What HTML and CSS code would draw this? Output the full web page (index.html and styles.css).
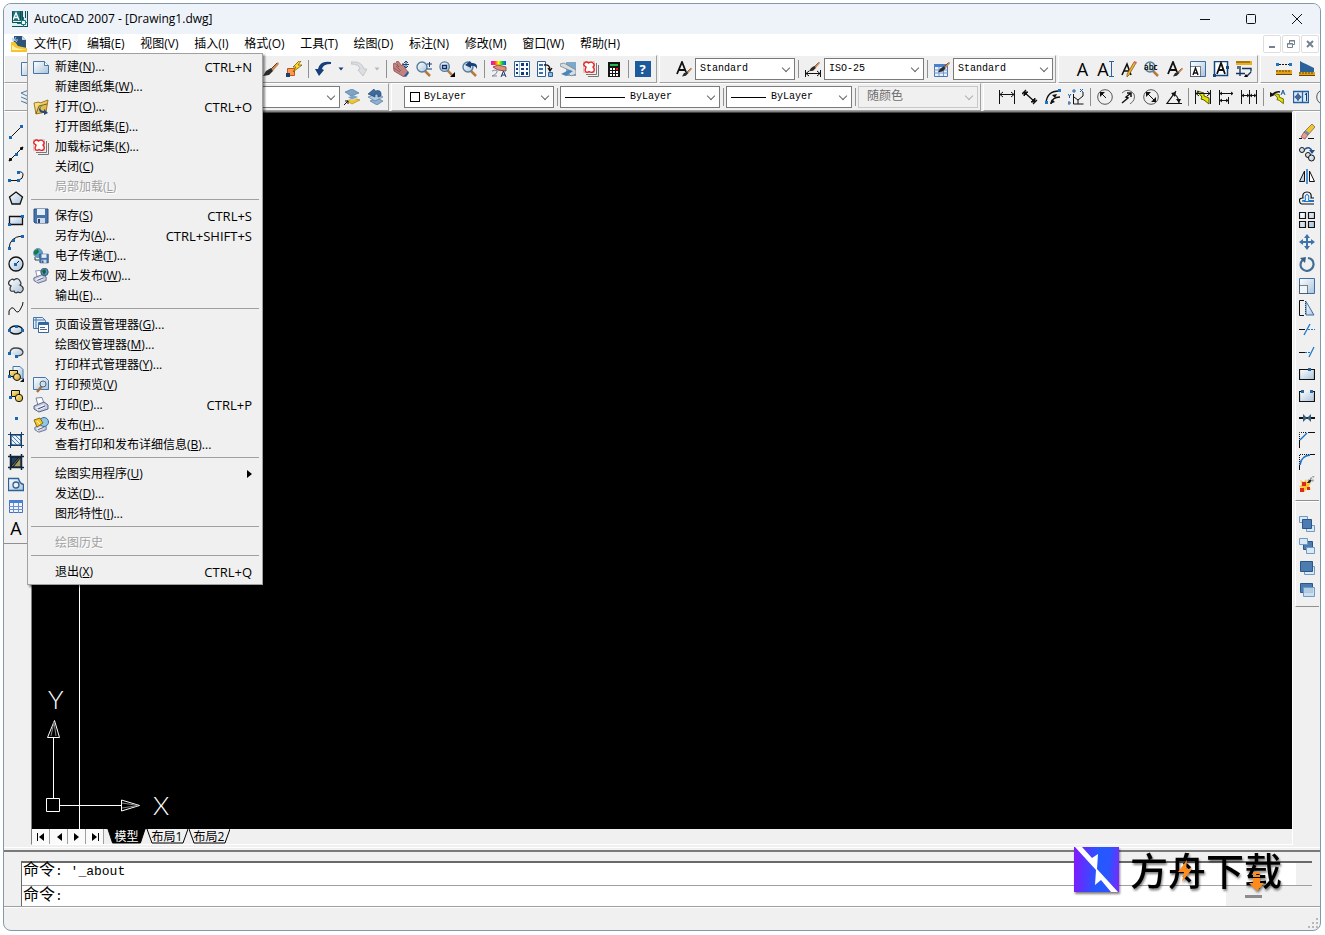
FILE: index.html
```html
<!DOCTYPE html>
<html lang="zh-CN">
<head>
<meta charset="utf-8">
<title>AutoCAD 2007 - [Drawing1.dwg]</title>
<link rel="stylesheet" href="styles.css">
</head>
<body>
<svg class="defs" aria-hidden="true">
  <defs>
    <linearGradient id="steel" x1="0" y1="0" x2="1" y2="1"><stop offset="0" stop-color="#fff"/><stop offset="1" stop-color="#a9c3dc"/></linearGradient>
    <linearGradient id="gold" x1="0" y1="0" x2="1" y2="1"><stop offset="0" stop-color="#fff6a8"/><stop offset="1" stop-color="#d49a1c"/></linearGradient>
    <linearGradient id="violet" x1="0" y1=".6" x2="1" y2=".7"><stop offset="0" stop-color="#7d1cff"/><stop offset=".5" stop-color="#2458ff"/><stop offset=".75" stop-color="#2a55ff"/><stop offset="1" stop-color="#7a28ff"/></linearGradient>
    <linearGradient id="rainbow"><stop offset="0" stop-color="#f0f"/><stop offset=".25" stop-color="#f33"/><stop offset=".5" stop-color="#ff0"/><stop offset=".75" stop-color="#0c4"/><stop offset="1" stop-color="#05f"/></linearGradient>
    <symbol id="brush" viewBox="0 0 16 16"><path d="M15 1 8 8l2 2 6-7z" fill="#c98a58"/><path d="M8 7 3 10 0 15l6-1 4-4z" fill="#2b2b2b"/><path d="M14 2 8 8" stroke="#6b3d20"/></symbol>
    <symbol id="cloudset" viewBox="0 0 16 16"><path d="M5 15.500h10.500V4M3 13.500h10.500V2" fill="none" stroke="#777"/><path d="M.500.500h11v11H.500z" fill="#f4f4f4" stroke="#ccc"/><path d="M3 6Q-.500 4 1.500 2q2-2 4 0 3-2 5 .500 1.500 2-.500 3.500 2.500 3 0 5-2 1-4-.500-2 1.500-3.500 0-1-2 .500-4z" fill="#fff" stroke="#f02020" stroke-width="1.400"/></symbol>
    <symbol id="loupe" viewBox="0 0 16 16"><path d="m9 10 5 5" stroke="#b77a3c" stroke-width="2.500"/><circle cx="6" cy="6" r="5" fill="url(#steel)" stroke="#557d99" stroke-width="1.400"/></symbol>
    <symbol id="floppy" viewBox="0 0 16 16"><path d="M1 1h14v14H2l-1-1z" fill="#4673a8" stroke="#2d4f7c"/><path d="M4 1h8v6H4z" fill="#e4eef8"/><path d="M4 10h8v5H4z" fill="#cfdae6"/><path d="M5 11h2v4H5z" fill="#23486f"/></symbol>
    <symbol id="printer" viewBox="0 0 16 16"><path d="m3 1 6-.500 2 6-6 2z" fill="#fff" stroke="#7783a8"/><path d="m1 9 10-4 4 3v4l-9 3-5-3z" fill="#c5cbe0" stroke="#596388"/><path d="m3 11 8-3M4 13l8-3" stroke="#fff"/><path d="M5 12l7-3" stroke="#454e72"/></symbol>
    <symbol id="bolt" viewBox="0 0 16 16"><path d="M2 2 9 4 9 7 14 9 14 15 9 11 6 10 7 8z" fill="#e8e000" stroke="#4a5a00"/></symbol>
    <symbol id="down" viewBox="0 0 8 8"><path d="M1.500 2.500h5L4 5.500z" fill="currentColor"/></symbol>
  </defs>
</svg>

<div class="window">
  <header class="titlebar">
    <svg class="icon" viewBox="0 0 16 16"><path d="M0 0h16v16H0z" fill="#dff0ef"/><path d="M0 0h10v10H0z" fill="#1f7378"/><path d="m1 9 3-7 3 7M2.500 6.500h3" fill="none" stroke="#fff" stroke-width="1.300"/><path d="M.500 11V.500M8.500 0v9M10.500 0v11M13.500 0v7M15.500 0v16M0 11.500h9M0 15.500h16" fill="none" stroke="#114e55"/><path d="M9.500 9.500h4v4h-4z" fill="#fff" stroke="#187a80"/><path d="M11.500 6v3M11.500 14v2M5 12.500h4M14 11.500h2" stroke="#187a80"/></svg>
    <h1>AutoCAD 2007 - [Drawing1.dwg]</h1>
    <div class="caption">
      <button type="button" aria-label="最小化"><svg class="icon" viewBox="0 0 16 16"><path d="M3 8.500h10"/></svg></button>
      <button type="button" aria-label="最大化"><svg class="icon" viewBox="0 0 16 16"><rect x="3.500" y="3.500" width="9" height="9" rx="1"/></svg></button>
      <button type="button" aria-label="关闭"><svg class="icon" viewBox="0 0 16 16"><path d="m3 3 10 10M13 3 3 13"/></svg></button>
    </div>
  </header>

  <nav class="menubar">
    <svg class="icon" viewBox="0 0 16 16"><path d="M3 0h8l4 4v8H3z" fill="#2c5276"/><path d="M11 0v4h4z" fill="#c7dcef"/><path d="m1 2 5 4M5 1 2 6M1 4h6" stroke="#a9c9e6"/><path d="M0 6h4l3 4 9 2v4H0z" fill="#f5c430"/><path d="m1 9 4 3 10 2H1z" fill="#fff1a4"/></svg>
    <div class="menus">
      <div class="menu-root">
        <button type="button" class="open" aria-expanded="true">文件(F)</button>
        <div class="dropdown" role="menu">
          <button type="button" role="menuitem"><svg class="icon" viewBox="0 0 16 16"><path d="M.500 2.500h11l4 4v8H.500z" fill="url(#steel)" stroke="#4576aa"/><path d="M11.500 2.500v4h4" fill="#fff" stroke="#4576aa"/></svg><span>新建(<u>N</u>)...</span><kbd>CTRL+N</kbd></button>
          <button type="button" role="menuitem"><span>新建图纸集(<u>W</u>)...</span></button>
          <button type="button" role="menuitem"><svg class="icon" viewBox="0 0 16 16"><path d="m1 4 5-1 1 1 8-3-2 12-10 2z" fill="url(#gold)" stroke="#9b7a26"/><path d="m3 15 3-8 8-2" fill="none" stroke="#7a5f1c"/><path d="M10 7q-4 1-2 4 1 1 3 1v-2l4 4-4 2v-2q-5 0-5-4 1-3 4-3z" fill="#244a78"/></svg><span>打开(<u>O</u>)...</span><kbd>CTRL+O</kbd></button>
          <button type="button" role="menuitem"><span>打开图纸集(<u>E</u>)...</span></button>
          <button type="button" role="menuitem"><svg class="icon"><use href="#cloudset"/></svg><span>加载标记集(<u>K</u>)...</span></button>
          <button type="button" role="menuitem"><span>关闭(<u>C</u>)</span></button>
          <button type="button" role="menuitem" disabled><span>局部加载(<u>L</u>)</span></button>
          <hr>
          <button type="button" role="menuitem"><svg class="icon"><use href="#floppy"/></svg><span>保存(<u>S</u>)</span><kbd>CTRL+S</kbd></button>
          <button type="button" role="menuitem"><span>另存为(<u>A</u>)...</span><kbd>CTRL+SHIFT+S</kbd></button>
          <button type="button" role="menuitem"><svg class="icon" viewBox="0 0 16 16"><circle cx="5" cy="5" r="4.500" fill="#5aa0cc" stroke="#7594a8"/><path d="m1 3 4-2 1 3-3 3-2-1z" fill="#167a45"/><path d="M2 9v3h4" stroke="#245" fill="none"/><use href="#floppy" x="6" y="5" width="10" height="11"/></svg><span>电子传递(<u>T</u>)...</span></button>
          <button type="button" role="menuitem"><svg class="icon" viewBox="0 0 16 16"><use href="#printer" y="2" width="14" height="14"/><circle cx="11.500" cy="4" r="3.700" fill="#4a98cc" stroke="#456"/><path d="m9 3 3-2 1 3-2 3z" fill="#175f3b"/></svg><span>网上发布(<u>W</u>)...</span></button>
          <button type="button" role="menuitem"><span>输出(<u>E</u>)...</span></button>
          <hr>
          <button type="button" role="menuitem"><svg class="icon" viewBox="0 0 16 16"><path d="M.500.500h9l3 3v8H.500z" fill="#e3effa" stroke="#4576aa"/><path d="M3 0v12M0 3h12" stroke="#4576aa"/><path d="M5.500 5.500h10v10h-10z" fill="#fff" stroke="#376497"/><path d="M5 6h11v2H5z" fill="#2f6da8"/><path d="M7 10.500h5M7 12.500h7" stroke="#568"/></svg><span>页面设置管理器(<u>G</u>)...</span></button>
          <button type="button" role="menuitem"><span>绘图仪管理器(<u>M</u>)...</span></button>
          <button type="button" role="menuitem"><span>打印样式管理器(<u>Y</u>)...</span></button>
          <button type="button" role="menuitem"><svg class="icon" viewBox="0 0 16 16"><path d="M.500.500h12l3 3v9H.500z" fill="url(#steel)" stroke="#4576aa"/><path d="m9 9-5 6" stroke="#a37044" stroke-width="2.500"/><circle cx="10" cy="7" r="3" fill="#c9e0f2" stroke="#567"/></svg><span>打印预览(<u>V</u>)</span></button>
          <button type="button" role="menuitem"><svg class="icon"><use href="#printer"/></svg><span>打印(<u>P</u>)...</span><kbd>CTRL+P</kbd></button>
          <button type="button" role="menuitem"><svg class="icon" viewBox="0 0 16 16"><use href="#printer" y="3" width="15" height="13"/><circle cx="11" cy="5" r="4.500" fill="#8fc8e6" stroke="#386a9c"/><path d="m1 3 6-2 3 5-6 4z" fill="#f4c522" stroke="#8b6a05"/><path d="m4 4 3 3" stroke="#fff"/></svg><span>发布(<u>H</u>)...</span></button>
          <button type="button" role="menuitem"><span>查看打印和发布详细信息(<u>B</u>)...</span></button>
          <hr>
          <button type="button" role="menuitem" aria-haspopup="true"><span>绘图实用程序(<u>U</u>)</span><svg class="sub" viewBox="0 0 5 8"><path d="M0 0v8l5-4z"/></svg></button>
          <button type="button" role="menuitem"><span>发送(<u>D</u>)...</span></button>
          <button type="button" role="menuitem"><span>图形特性(<u>I</u>)...</span></button>
          <hr>
          <button type="button" role="menuitem" disabled><span>绘图历史</span></button>
          <hr>
          <button type="button" role="menuitem"><span>退出(<u>X</u>)</span><kbd>CTRL+Q</kbd></button>
        </div>
      </div>
      <button type="button">编辑(E)</button>
      <button type="button">视图(V)</button>
      <button type="button">插入(I)</button>
      <button type="button">格式(O)</button>
      <button type="button">工具(T)</button>
      <button type="button">绘图(D)</button>
      <button type="button">标注(N)</button>
      <button type="button">修改(M)</button>
      <button type="button">窗口(W)</button>
      <button type="button">帮助(H)</button>
    </div>
    <div class="mdi">
      <button type="button" aria-label="最小化图形"><svg viewBox="0 0 10 10"><path d="M2 8h6" stroke-width="2"/></svg></button>
      <button type="button" aria-label="还原图形"><svg viewBox="0 0 10 10"><path d="M3.500 4V1.500h5v4H7M1.500 4.500h5v4h-5zM3 2h6M1 5h6"/></svg></button>
      <button type="button" aria-label="关闭图形"><svg viewBox="0 0 10 10"><path d="m2 2 6 6M8 2 2 8" stroke-width="2"/></svg></button>
    </div>
  </nav>

  <div class="bars">
    <div class="bar bar-standard" role="toolbar" aria-label="标准">
      <button type="button" class="tool first" aria-label="新建"><svg class="icon" viewBox="0 0 16 16"><path d="M.500 1.500h11v13H.500z" fill="url(#steel)" stroke="#4576aa"/></svg></button>
      <button type="button" class="tool" aria-label="特性匹配"><svg class="icon"><use href="#brush"/></svg></button>
      <button type="button" class="tool" aria-label="块编辑器"><svg class="icon" viewBox="0 0 16 16"><path d="M1.500 7.500h7v7h-7z" fill="#ff9a4a" stroke="#c8501c"/><path d="M0 12h4v4H0z" fill="#14437a"/><path d="m13 0-6 6h3l-3 5 9-7h-4l3-4z" fill="#ffd825" stroke="#7c5a00" stroke-width=".8"/></svg></button>
      <i class="sep"></i>
      <button type="button" class="tool" aria-label="放弃"><svg class="icon" viewBox="0 0 16 16"><path d="M16 1Q5-1 3 8H0l4 7 5-6-2-1q1-5 9-5z" fill="#163f7c"/></svg></button>
      <button type="button" class="tool narrow" aria-label="放弃列表"><svg class="tri"><use href="#down"/></svg></button>
      <button type="button" class="tool" aria-label="重做"><svg class="icon" viewBox="0 0 16 16"><path d="M0 1q11-1 13 7h3l-4 7-5-6 2-1Q8 3 0 3z" fill="#dcdfe2" stroke="#b4b9be" stroke-width=".7"/></svg></button>
      <button type="button" class="tool narrow muted" aria-label="重做列表"><svg class="tri"><use href="#down"/></svg></button>
      <i class="sep"></i>
      <button type="button" class="tool" aria-label="实时平移"><svg class="icon" viewBox="0 0 16 16"><path d="m0 3 2-1 4 4-3-5 2-1 4 5 1-3 2 5 3 4-4 5-5-3-5-3z" fill="#c08480" stroke="#8c4444" stroke-width=".7"/><path d="m1 7 6 4M3 5l5 5" stroke="#8c4444" stroke-width=".7"/><path d="M13 0v7M9.500 3.500H16M11 2l2-2 2 2M11 5l2 2 2-2" stroke="#184a80" fill="none"/><path d="m11 15 4-5 1 2-3 4z" fill="#285b99"/></svg></button>
      <button type="button" class="tool" aria-label="实时缩放"><svg class="icon" viewBox="0 0 16 16"><use href="#loupe" width="16" height="16"/><path d="M11 3h5M13.500 1v5M11 8h5" stroke="#153d76"/></svg></button>
      <button type="button" class="tool" aria-label="窗口缩放"><svg class="icon" viewBox="0 0 16 16"><use href="#loupe" width="15" height="15"/><path d="M3.500 4.500h4v3h-4z" fill="none" stroke="#0c2c68" stroke-width="1.300"/><path d="M16 11v5h-5z"/></svg></button>
      <button type="button" class="tool" aria-label="缩放上一个"><svg class="icon" viewBox="0 0 16 16"><use href="#loupe" width="16" height="16"/><path d="M15 8q1-7-6-6L8 0 3 4l6 3V5q4-1 6 3z" fill="#163f7c"/></svg></button>
      <i class="sep"></i>
      <button type="button" class="tool" aria-label="特性"><svg class="icon" viewBox="0 0 16 16"><path d="M0 0h15v4H0z" fill="url(#rainbow)"/><path d="m2 6 5-2 8 2v4L7 9z" fill="#d99282" stroke="#965148"/><path d="M1 10q6-2 5 1t-5 4h5" fill="none" stroke="#7d8ba0"/><path d="m10 16 2.500-6L15 16M11 14h3" fill="none" stroke="#15366a"/></svg></button>
      <button type="button" class="tool" aria-label="设计中心"><svg class="icon" viewBox="0 0 16 16"><path d="M.500.500h15v15H.500z" fill="#f7fbff" stroke="#315f98"/><path d="M5.500 1v14" stroke="#9bb8d6"/><path d="M2 3h2v2H2zM2 7h2v2H2zM2 11h2v2H2zM7 2h3v3H7zM7 7h3v2H7zM7 11h3v3H7zM12 2h2v3h-2zM12 7h2v2h-2zM12 11h2v3h-2z" fill="#123c78"/></svg></button>
      <button type="button" class="tool" aria-label="工具选项板"><svg class="icon" viewBox="0 0 16 16"><path d="M.500.500h8v15h-8z" fill="#f7fbff" stroke="#315f98"/><path d="M2 3h4v2H2zM2 7h4v2H2zM2 11h4v2H2z" fill="#3b70a8"/><path d="M7 4q6-1 6 5M11 7l2 3 2-3" fill="none" stroke="#111" stroke-width="1.300"/><path d="M11.500 11.500h4v4h-4z" fill="#8db7e0" stroke="#315f98"/></svg></button>
      <button type="button" class="tool" aria-label="图纸集管理器"><svg class="icon" viewBox="0 0 16 16"><path d="M6 1h10v14H6z" fill="#7fa8c8"/><path d="m0 3 4-1 12 7v4l-5 2-3-3 3-2-11-5z" fill="#d8dde2" stroke="#77838e" stroke-width=".8"/><path d="m1 13 8-4 4 1-7 5z" fill="#4b86b8"/></svg></button>
      <button type="button" class="tool" aria-label="标记集管理器"><svg class="icon"><use href="#cloudset"/></svg></button>
      <button type="button" class="tool" aria-label="快速计算器"><svg class="icon" viewBox="0 0 16 16"><path d="M2 1h12v15H2z" fill="#151515"/><path d="M4 3h8v2H4z" fill="#28b44b"/><path d="M4 7h2v2H4zM7 7h2v2H7zM4 10h2v2H4zM7 10h2v2H7zM4 13h2v2H4zM7 13h2v2H7zM10 10h2v2h-2zM10 13h2v2h-2z" fill="#fff"/><path d="M10 7h2v2h-2z" fill="#e22"/></svg></button>
      <i class="sep"></i>
      <button type="button" class="tool help" aria-label="帮助"><span>?</span></button>
    </div>

    <div class="bar" role="toolbar" aria-label="样式">
      <button type="button" class="tool" aria-label="文字样式"><svg class="icon" viewBox="0 0 16 16"><path d="M1 13 6 1l4 10M3 9h6" fill="none" stroke="#111" stroke-width="1.800"/><use href="#brush" x="6" y="6" width="10" height="10"/></svg></button>
      <span class="combo w100"><select aria-label="文字样式名"><option>Standard</option></select></span>
      <i class="sep"></i>
      <button type="button" class="tool" aria-label="标注样式"><svg class="icon" viewBox="0 0 16 16"><use href="#brush" x="3" width="13" height="11"/><path d="M.500 9v7M15.500 9v7M1 12.500h14M4 10l-3 2.500L4 15M12 10l3 2.500-3 2.500" fill="none" stroke="#111"/></svg></button>
      <span class="combo w100"><select aria-label="标注样式名"><option>ISO-25</option></select></span>
      <i class="sep"></i>
      <button type="button" class="tool" aria-label="表格样式"><svg class="icon" viewBox="0 0 16 16"><path d="M.500 3.500h13v12H.500z" fill="#e8f1fb" stroke="#4a74b4"/><path d="M0 3h14v3H0z" fill="#4a7fcc"/><path d="M0 9h14M0 12h14M5 6v9M9.500 6v9" stroke="#6f97cd"/><use href="#brush" x="4" width="12" height="12"/></svg></button>
      <span class="combo w100"><select aria-label="表格样式名"><option>Standard</option></select></span>
    </div>

    <div class="bar" role="toolbar" aria-label="文字">
      <button type="button" class="tool letter" aria-label="多行文字">A</button>
      <button type="button" class="tool letter" aria-label="单行文字">A<svg class="ibeam" viewBox="0 0 5 16"><path d="M0 .500h5M0 15.500h5M2.500 1v14" stroke="#2864a0"/></svg></button>
      <button type="button" class="tool" aria-label="编辑文字"><svg class="icon" viewBox="0 0 16 16"><path d="m1 14 5-11 4 11M3 10h6" fill="none" stroke="#111" stroke-width="1.600"/><path d="m13 1 2 1-7 12-2 2V13z" fill="#f1b52a" stroke="#775016" stroke-width=".7"/><path d="m13 0 3 1-1 2-2-1z" fill="#d66"/></svg></button>
      <button type="button" class="tool find" aria-label="查找和替换"><svg class="icon" viewBox="0 0 16 16"><use href="#loupe" width="16" height="16"/></svg><span>abc</span></button>
      <button type="button" class="tool" aria-label="文字样式"><svg class="icon" viewBox="0 0 16 16"><path d="M1 13 6 1l4 10M3 9h6" fill="none" stroke="#111" stroke-width="1.800"/><use href="#brush" x="6" y="6" width="10" height="10"/></svg></button>
      <button type="button" class="tool" aria-label="缩放文字"><svg class="icon" viewBox="0 0 16 16"><path d="M.500.500h15v15H.500z" fill="url(#steel)" stroke="#3b6ea5"/><path d="M.500 5.500h10v10H.500z" fill="#fff" stroke="#111" stroke-dasharray="1 1"/><path d="m3 14 2.500-7L8 14M4 12h3" fill="none" stroke="#111" stroke-width="1.400"/></svg></button>
      <button type="button" class="tool" aria-label="对正文字"><svg class="icon" viewBox="0 0 16 16"><path d="M1.500.500h13v14h-13z" fill="#fff" stroke="#16477f" stroke-width="1.500"/><path d="m4 13 4-11 4 11M5 9h6" fill="none" stroke="#111" stroke-width="1.800"/><path d="M0 13h3v3H0zM13 5h3v3h-3z" fill="#16477f"/></svg></button>
      <button type="button" class="tool" aria-label="在空间之间转换距离"><svg class="icon" viewBox="0 0 16 16"><path d="M0 0h16v4H0z" fill="#e9af1c"/><path d="M1 0v2M3 0v2M5 0v2M7 0v2M9 0v2M11 0v2M13 0v2" stroke="#664200"/><path d="M4 5v10M0 12.500h9M6 7.500h9v3M2 5v3M11 15l4-4" fill="none" stroke="#16365f" stroke-width="1.400"/><path d="m10 13 2 3H8z"/></svg></button>
    </div>

    <div class="bar bar-cut" role="toolbar" aria-label="查询">
      <button type="button" class="tool" aria-label="距离"><svg class="icon" viewBox="0 0 16 16"><path d="M0 3.500h16" stroke="#111" stroke-dasharray="2 1"/><path d="M0 2h3v3H0zM13 2h3v3h-3z" fill="#1b75c8"/><path d="M0 9h16v5H0z" fill="#e0a21a"/><path d="M1 9v2M4 9v2M7 9v2M10 9v2M13 9v2M0 13.500h16" stroke="#6a4500"/></svg></button>
      <button type="button" class="tool" aria-label="区域"><svg class="icon" viewBox="0 0 16 16"><path d="M1 0q3 2 6 3l8 4v4H1z" fill="#2c629a"/><path d="M0 11h16v4H0z" fill="#e0a21a"/><path d="M1 11v2M4 11v2M7 11v2M10 11v2M13 11v2M0 14.500h16" stroke="#6a4500"/></svg></button>
    </div>
  </div>

  <div class="bars">
    <div class="bar bar-layers" role="toolbar" aria-label="图层">
      <button type="button" class="tool first" aria-label="图层特性管理器"><svg class="icon" viewBox="0 0 16 16"><path d="m0 4 8-3 6 3-8 3zM0 8l7 3 7-3M0 12l7 3 7-3" fill="url(#steel)" stroke="#52799f"/></svg></button>
      <span class="combo fill"><select aria-label="图层"><option></option></select></span>
      <button type="button" class="tool" aria-label="将对象的图层置为当前"><svg class="icon" viewBox="0 0 16 16"><path d="m3 12 5 3 8-4-6-2z" fill="#f0c52c" stroke="#a47d12" stroke-width=".6"/><path d="m3 8 5 3 7-3-5-2z" fill="#7ba4c8" stroke="#fff" stroke-width=".6"/><path d="m1 3 6 4 8-3-7-4z" fill="#7ba4c8" stroke="#456f98" stroke-width=".6"/><path d="m0 16 4-4M1 12h3v3" stroke="#111" fill="none"/></svg></button>
      <button type="button" class="tool" aria-label="上一个图层"><svg class="icon" viewBox="0 0 16 16"><path d="m3 12 7 4 6-4-6-3z" fill="#8fb0ce" stroke="#456f98" stroke-width=".6"/><path d="m1 8 7 4 8-4-6-3z" fill="#b3cbe0" stroke="#456f98" stroke-width=".6"/><path d="M14 7q1-7-6-5L7 0 1 5l7 3V5q3-1 3 3z" fill="#3c6c9c" stroke="#1a4170" stroke-width=".6"/></svg></button>
    </div>

    <div class="bar" role="toolbar" aria-label="特性">
      <span class="combo w150 swatch"><select aria-label="颜色"><option>ByLayer</option></select></span>
      <i class="sep"></i>
      <span class="combo w160 linetype"><select aria-label="线型"><option>ByLayer</option></select></span>
      <i class="sep"></i>
      <span class="combo w126 weight"><select aria-label="线宽"><option>ByLayer</option></select></span>
      <i class="sep"></i>
      <span class="combo w120 off"><select aria-label="打印样式" disabled><option>随颜色</option></select></span>
    </div>

    <div class="bar bar-cut" role="toolbar" aria-label="标注">
      <button type="button" class="tool" aria-label="线性"><svg class="icon line" viewBox="0 0 16 16"><path d="M.500 1v14M15.500 1v14M1 5.500h14M4 3 1 5.500 4 8M12 3l3 2.500L12 8"/></svg></button>
      <button type="button" class="tool" aria-label="对齐"><svg class="icon line" viewBox="0 0 16 16"><path d="m0 5 4-4M11 15l4-4M2 3l11 10" stroke-width="1.300"/><path d="M2 3v4l4-4zM13 13V9l-4 4z" fill="#111"/></svg></button>
      <button type="button" class="tool" aria-label="弧长"><svg class="icon line" viewBox="0 0 16 16"><path d="M1 14Q2 2 14 2M6 15Q7 8 15 8" stroke-width="1.300"/><path d="m7 6 5-1-2 4zM7 10l-2 5 5-2z" fill="#111" stroke="none"/><path d="M0 12h3v3H0zM13 0h3v3h-3z" fill="#1b75c8" stroke="none"/></svg></button>
      <button type="button" class="tool" aria-label="坐标"><svg class="icon line" viewBox="0 0 16 16"><path d="M5.500 5v10h10M6 8l4 3 5-4V3M10 11v4"/><path d="m0 5 1.500 2L3 5M1.500 7v2M12 0l3 3M15 0l-3 3M5 1h2v2H5zM0 13h2v2H0z" stroke="#1d5fa5"/></svg></button>
      <i class="sep"></i>
      <button type="button" class="tool" aria-label="半径"><svg class="icon line" viewBox="0 0 16 16"><circle cx="8" cy="8" r="7.300" stroke="#555"/><path d="M9 9 4 4"/><path d="M3 3h5L3 8z" fill="#111" stroke="none"/></svg></button>
      <button type="button" class="tool" aria-label="折弯"><svg class="icon line" viewBox="0 0 16 16"><path d="M2 4q6-6 12 1 2 6-4 10" stroke="#666"/><path d="m2 14 6-5-2-1 5-4M7 4h4v4" stroke-width="1.500"/></svg></button>
      <button type="button" class="tool" aria-label="直径"><svg class="icon line" viewBox="0 0 16 16"><circle cx="8" cy="8" r="7.300" stroke="#555"/><path d="m4 4 8 8"/><path d="M3 3h5L3 8zM13 13H8l5-5z" fill="#111" stroke="none"/></svg></button>
      <button type="button" class="tool" aria-label="角度"><svg class="icon line" viewBox="0 0 16 16"><path d="M16 14.500H1L10 2M6 5q6 0 7 9" stroke-width="1.200"/><path d="m5 4 5-1-1 5zM10 10h5l-2 4z" fill="#111" stroke="none"/></svg></button>
      <i class="sep"></i>
      <button type="button" class="tool" aria-label="快速标注"><svg class="icon line" viewBox="0 0 16 16"><use href="#bolt" width="16" height="16"/><path d="M.500 1v14M15.500 1v14M1 4.500h14M4 2 1 4.500 4 7M12 2l3 2.500L12 7"/></svg></button>
      <button type="button" class="tool" aria-label="基线"><svg class="icon line" viewBox="0 0 16 16"><path d="M1.500 1v15M1 4.500h14M13 3l2 1.500L13 6M1 11.500h9M8 10l2 1.500L8 13M10.500 8v7M4 3 2 4.500 4 6M4 10l-2 1.500L4 13"/></svg></button>
      <button type="button" class="tool" aria-label="连续"><svg class="icon line" viewBox="0 0 16 16"><path d="M.500 1v14M8.500 1v14M15.500 1v14M0 6.500h16M3 5 1 6.500 3 8M6 5l2 1.500L6 8M11 5 9 6.500 11 8M13 5l2 1.500L13 8"/></svg></button>
      <i class="sep"></i>
      <button type="button" class="tool" aria-label="快速引线"><svg class="icon line" viewBox="0 0 16 16"><use href="#bolt" x="2" y="2" width="13" height="14"/><path d="M2 6q4-4 8-3" stroke-width="1.500"/><path d="M0 8V3l5 3z" fill="#111" stroke="none"/><path d="m11 6 2-5 2 5M12 4h2" stroke="#1d5fa5"/></svg></button>
      <button type="button" class="tool" aria-label="公差"><svg class="icon" viewBox="0 0 16 16"><path d="M.500 2.500h15v11H.500zM9.500 2v12" fill="#dcecfa" stroke="#245f9f" stroke-width="1.300"/><path d="M5 4v8M1.500 8h7M13.500 4v8M12 6l1.500-2" stroke="#153d76" fill="none"/><circle cx="5" cy="8" r="2.200" fill="none" stroke="#153d76"/></svg></button>
      <button type="button" class="tool" aria-label="圆心标记"><svg class="icon line" viewBox="0 0 16 16"><circle cx="8" cy="8" r="7.300" stroke="#555"/><path d="M8 5v6M5 8h6"/></svg></button>
    </div>
  </div>

  <main class="work">
    <div class="side side-left">
      <div class="palette" role="toolbar" aria-label="绘图">
        <button type="button" class="tool" aria-label="直线"><svg class="icon line" viewBox="0 0 16 16"><path d="M2 14 14 2"/><path class="pt" d="M1 12h3v3H1zM12 1h3v3h-3z"/></svg></button>
        <button type="button" class="tool" aria-label="构造线"><svg class="icon line" viewBox="0 0 16 16"><path d="M1 15 15 1M1 15l1-3 2 2zM15 1l-3 1 2 2z" fill="#111"/><path class="pt" d="M7 7h3v3H7z"/></svg></button>
        <button type="button" class="tool" aria-label="多段线"><svg class="icon line" viewBox="0 0 16 16"><path d="M1 12.500h11M10 4q5-1 5 3t-4 5"/><path class="pt" d="M0 11h3v3H0zM9 11h3v3H9zM9 3h3v3H9z"/></svg></button>
        <button type="button" class="tool" aria-label="正多边形"><svg class="icon line" viewBox="0 0 16 16"><path d="m8 2 6.500 5-2.500 7H4L1.500 7z" fill="url(#steel)" stroke-width="1.300"/></svg></button>
        <button type="button" class="tool" aria-label="矩形"><svg class="icon line" viewBox="0 0 16 16"><path d="M1.500 4.500h13v8h-13z" fill="url(#steel)" stroke-width="1.300"/><path class="pt" d="M0 11h3v3H0zM13 3h3v3h-3z"/></svg></button>
        <button type="button" class="tool" aria-label="圆弧"><svg class="icon line" viewBox="0 0 16 16"><path d="M1 14Q2 3 14 2"/><path class="pt" d="M0 13h3v3H0zM4 5h3v3H4zM13 1h3v3h-3z"/></svg></button>
        <button type="button" class="tool" aria-label="圆"><svg class="icon line" viewBox="0 0 16 16"><circle cx="8" cy="8" r="7" fill="url(#steel)" stroke-width="1.300"/><path d="m8 8 3-3"/><path class="pt" d="M6 7h3v3H6z"/></svg></button>
        <button type="button" class="tool" aria-label="修订云线"><svg class="icon line" viewBox="0 0 16 16"><path d="M3 8Q-1 6 1.500 3 4 0 6 2q4-3 6 1 2 3 0 4 4 2 3 5-2 4-5 2-3 2-4-1-4 1-4-2 0-2 1-3z" fill="url(#steel)" stroke="#333" stroke-width="1.200"/></svg></button>
        <button type="button" class="tool" aria-label="样条曲线"><svg class="icon line" viewBox="0 0 16 16"><path d="M1 15V11q3-6 6-1t6-2q2-3 2-6"/></svg></button>
        <button type="button" class="tool" aria-label="椭圆"><svg class="icon line" viewBox="0 0 16 16"><ellipse cx="8" cy="8" rx="6.500" ry="4" fill="url(#steel)" stroke-width="1.300"/><path class="pt" d="M0 7h3v3H0zM13 7h3v3h-3zM7 3h3v3H7z"/></svg></button>
        <button type="button" class="tool" aria-label="椭圆弧"><svg class="icon line" viewBox="0 0 16 16"><path d="M2 9q0-5 6-5t7 4q0 4-7 4z" fill="url(#steel)" stroke="none"/><path d="M2 9q0-5 6-5t7 4q0 4-7 4" stroke="#444" stroke-width="1.300"/><path class="pt" d="M0 8h3v3H0zM7 11h3v3H7z"/></svg></button>
        <button type="button" class="tool" aria-label="插入块"><svg class="icon line" viewBox="0 0 16 16"><path d="M5 .500h7l3 3v9H5z" fill="url(#steel)" stroke="#4576aa"/><path d="M1.500 4.500h8v6h-8z" fill="url(#gold)"/><circle cx="9" cy="11" r="3.500" fill="url(#gold)"/><path d="M16 12v4h-4z" fill="#111" stroke="none"/><path class="pt" d="M0 9h3v3H0z"/></svg></button>
        <button type="button" class="tool" aria-label="创建块"><svg class="icon line" viewBox="0 0 16 16"><path d="M3.500 2.500h8v6h-8z" fill="url(#gold)"/><circle cx="11" cy="10" r="3.700" fill="url(#gold)"/><path class="pt" d="M1 8h3v3H1z"/></svg></button>
        <button type="button" class="tool" aria-label="点"><svg class="icon" viewBox="0 0 16 16"><path class="pt" d="M7 7h3v3H7z"/></svg></button>
        <button type="button" class="tool" aria-label="图案填充"><svg class="icon line" viewBox="0 0 16 16"><path d="M3 3h10v10H3z" fill="#eaf3fb"/><path d="m3 3 10 10M3 7l6 6M7 3l6 6M3 11l2 2M11 3l2 2" stroke="#1b62aa" stroke-width=".8"/><path d="M0 2.500h16M0 13.500h16M2.500 0v16M13.500 0v16" stroke="#163f69"/></svg></button>
        <button type="button" class="tool" aria-label="渐变色"><svg class="icon line" viewBox="0 0 16 16"><path d="M3 3h10v10H3z" fill="#5d6a62"/><path d="M13 3v10H5z" fill="#a19a62"/><path d="M3 3h8L3 12z" fill="#24405f"/><path d="M0 2.500h16M0 13.500h16M2.500 0v16M13.500 0v16" stroke="#102540" stroke-width="1.500"/></svg></button>
        <button type="button" class="tool" aria-label="面域"><svg class="icon line" viewBox="0 0 16 16"><path d="M.500 2.500h10q1 5 5 6v6H.500z" fill="url(#steel)" stroke="#2d6197" stroke-width="1.300"/><circle cx="8" cy="9" r="3" fill="#f0f0f0" stroke="#2d6197" stroke-width="1.300"/></svg></button>
        <button type="button" class="tool" aria-label="表格"><svg class="icon" viewBox="0 0 16 16"><path d="M1.500 2.500h13v12h-13z" fill="#eef5ff" stroke="#4a6fb8"/><path d="M1 2h14v3H1z" fill="#4a7fd0"/><path d="M1 8.500h14M1 11.500h14M5.500 5v10M10.500 5v10" stroke="#6d8fcd"/></svg></button>
        <button type="button" class="tool letter" aria-label="多行文字">A</button>
      </div>
    </div>

    <section class="view">
      <div class="canvas">
        <div class="crosshair"></div>
        <svg class="ucs" viewBox="0 0 130 143"><g fill="none" stroke="#fff"><path d="M.500 112.500h13v13h-13zM7.500 112V51M14 119.500h61M1.500 51.500h12l-5-17zM75.500 114v11l18-5.500z"/><path d="M5 50l3-14 2 14M76 117l16 2.500L76 122" stroke="#888"/></g><text x="2" y="23">Y</text><text x="107" y="129">X</text></svg>
      </div>
      <div class="tabs">
        <button type="button" class="step" aria-label="第一个"><svg viewBox="0 0 10 10"><path d="M1 1h1v8H1zM8 1v8L3 5z"/></svg></button>
        <button type="button" class="step" aria-label="上一个"><svg viewBox="0 0 10 10"><path d="M8 1v8L3 5z"/></svg></button>
        <button type="button" class="step" aria-label="下一个"><svg viewBox="0 0 10 10"><path d="M2 1v8l5-4z"/></svg></button>
        <button type="button" class="step" aria-label="最后一个"><svg viewBox="0 0 10 10"><path d="M2 1v8l5-4zM8 1h1v8H8z"/></svg></button>
        <div class="sheets">
          <button type="button" class="sheet current"><svg viewBox="0 0 42 15" preserveAspectRatio="none"><path d="M1 0 6 14h30l5-14z"/></svg><span>模型</span></button>
          <button type="button" class="sheet"><svg viewBox="0 0 42 15" preserveAspectRatio="none"><path d="M1 0 6 14h31l5-14"/></svg><span>布局1</span></button>
          <button type="button" class="sheet"><svg viewBox="0 0 42 15" preserveAspectRatio="none"><path d="M1 0 6 14h31l5-14"/></svg><span>布局2</span></button>
        </div>
      </div>
    </section>

    <div class="side side-right">
      <div class="palette" role="toolbar" aria-label="修改">
        <button type="button" class="tool" aria-label="删除"><svg class="icon" viewBox="0 0 16 16"><path d="M0 14.500h3M9 14.500h6" stroke="#111"/><path d="m13 0 3 3-7 8-4-3z" fill="#f4c42c" stroke="#5d5a4c" stroke-width=".7"/><path d="m5 8 4 3-3 4-4-2z" fill="#e0a098" stroke="#8c4a44" stroke-width=".7"/><path d="m6 7 4 3" stroke="#5f8fc0" stroke-width="2"/></svg></button>
        <button type="button" class="tool" aria-label="复制"><svg class="icon line" viewBox="0 0 16 16"><circle cx="3" cy="4" r="2.500" fill="url(#steel)"/><circle cx="9" cy="9" r="2.500" fill="url(#steel)"/><circle cx="12.500" cy="12" r="3" fill="url(#steel)"/><path d="M6 3q5-3 7 2" stroke="#1e4f8d" stroke-width="1.500"/><path d="M10 4h6l-3 4z" fill="#1e4f8d" stroke="none"/></svg></button>
        <button type="button" class="tool" aria-label="镜像"><svg class="icon line" viewBox="0 0 16 16"><path d="M5.500 3v10.500H.500z" fill="url(#steel)"/><path d="M10.500 3v10.500h5z" fill="#fff"/><path d="M8 1v15" stroke="#1b75c8" stroke-width="1.500"/></svg></button>
        <button type="button" class="tool" aria-label="偏移"><svg class="icon line" viewBox="0 0 16 16"><path d="M15 8h-3q1-6-4-6T4 8q-4 0-3.500 3T3 14h12" stroke-width="1.200"/><path d="M15 10.500H9.500q1-6-1.500-6t-1.500 6H3.500q-1 1 1 1H15" fill="#e8f3fd" stroke="#1b75c8"/></svg></button>
        <button type="button" class="tool" aria-label="阵列"><svg class="icon line" viewBox="0 0 16 16"><path d="M.500.500h6v6h-6zM9.500.500h6v6h-6zM.500 9.500h6v6h-6zM9.500 9.500h6v6h-6z" fill="url(#steel)" stroke-width="1.200"/></svg></button>
        <button type="button" class="tool" aria-label="移动"><svg class="icon" viewBox="0 0 16 16"><path d="m8 0 3 4H9v3h3V5l4 3-4 3V9H9v3h2l-3 4-3-4h2V9H4v2L0 8l4-3v2h3V4H5z" fill="#3d73aa"/></svg></button>
        <button type="button" class="tool" aria-label="旋转"><svg class="icon" viewBox="0 0 16 16"><path d="M9 2q6 1 5.500 7-1 5-6.500 6-6-1-6.500-6 0-3 2-5" fill="none" stroke="#426e95" stroke-width="2.200"/><path d="m1 2 6-1-1 6z" fill="#335f88"/></svg></button>
        <button type="button" class="tool" aria-label="缩放"><svg class="icon" viewBox="0 0 16 16"><path d="M.500.500h15v15H.500z" fill="url(#steel)" stroke="#3b6ea5"/><path d="M.500 7.500h8v8h-8z" fill="#eef5fb" stroke="#111" stroke-dasharray="1 1"/></svg></button>
        <button type="button" class="tool" aria-label="拉伸"><svg class="icon line" viewBox="0 0 16 16"><path d="M5 .500H.500v15H5"/><path d="M6.500 1v14" stroke-dasharray="1 1"/><path d="M7 1.500 15 15H7z" fill="url(#steel)" stroke="#3b6ea5"/></svg></button>
        <button type="button" class="tool" aria-label="修剪"><svg class="icon line" viewBox="0 0 16 16"><path d="M0 7.500h6"/><path d="M9 7.500h7" stroke="#1b75c8" stroke-dasharray="2 1"/><path d="M5 13 11 2" stroke="#1b75c8" stroke-width="1.300"/></svg></button>
        <button type="button" class="tool" aria-label="延伸"><svg class="icon line" viewBox="0 0 16 16"><path d="M0 8.500h6"/><path d="M6 8.500h6" stroke="#1b75c8" stroke-dasharray="2 1"/><path d="M10 13 15 3" stroke="#1b75c8" stroke-width="1.300"/></svg></button>
        <button type="button" class="tool" aria-label="打断于点"><svg class="icon line" viewBox="0 0 16 16"><path d="M.500 3.500h15v10H.500z" fill="url(#steel)" stroke-width="1.200"/><path d="M9 2h3v3H9z" fill="#2d65a0" stroke="none"/></svg></button>
        <button type="button" class="tool" aria-label="打断"><svg class="icon line" viewBox="0 0 16 16"><path d="M4 3.500H.500v10h15v-10H12" fill="url(#steel)" stroke-width="1.200"/><path d="M2 2h3v3H2zM11 2h3v3h-3z" fill="#2d65a0" stroke="none"/></svg></button>
        <button type="button" class="tool" aria-label="合并"><svg class="icon" viewBox="0 0 16 16"><path d="M0 8h16" stroke="#111" stroke-width="2"/><path d="m4 4 4 4-4 4zM12 4 8 8l4 4z" fill="#355f7f"/></svg></button>
        <button type="button" class="tool" aria-label="倒角"><svg class="icon line" viewBox="0 0 16 16"><path d="M.500 8v8M9 .500h7"/><path d="M.500 7V.500H8" stroke-dasharray="1 1"/><path d="m1 8 7-7" stroke="#1b75c8" stroke-width="1.500"/></svg></button>
        <button type="button" class="tool" aria-label="圆角"><svg class="icon line" viewBox="0 0 16 16"><path d="M.500 11v5M11 .500h5"/><path d="M.500 10V.500H10" stroke-dasharray="1 1"/><path d="M1 11Q2 2 11 1" stroke="#1b75c8" stroke-width="1.700"/></svg></button>
        <button type="button" class="tool" aria-label="分解"><svg class="icon" viewBox="0 0 16 16"><path d="m9 5 6-5M10 6l5-2" stroke="#9aa5ad" stroke-width="2" stroke-dasharray="2 1"/><path d="m8 8 4-4" stroke="#222" stroke-width="2"/><path d="m1 4 4 2 2-3 1 4h4l-2 3 2 4-4-1-3 3-1-4-4-1 3-3z" fill="#ffc42e"/><path d="M1 12h4v4H1zM3 6h4v4H3zM8 11h3v3H8z" fill="#d92a1c"/></svg></button>
      </div>
      <div class="palette second" role="toolbar" aria-label="绘图次序">
        <button type="button" class="tool" aria-label="前置"><svg class="icon" viewBox="0 0 16 16"><path d="M.500.500h8v6h-8zM7.500 9.500h8v6h-8z" fill="#dce9f5" stroke="#6c9cc4"/><path d="M3.500 3.500h9v9h-9z" fill="#4c7cb0" stroke="#2a5688"/></svg></button>
        <button type="button" class="tool" aria-label="后置"><svg class="icon" viewBox="0 0 16 16"><path d="M4.500 3.500h9v8h-9z" fill="#4c7cb0" stroke="#2a5688"/><path d="M.500.500h8v6h-8zM7.500 9.500h8v6h-8z" fill="#dce9f5" stroke="#6c9cc4"/></svg></button>
        <button type="button" class="tool" aria-label="置于对象之上"><svg class="icon" viewBox="0 0 16 16"><path d="M5.500 6.500h10v8h-10z" fill="#dce9f5" stroke="#6c9cc4"/><path d="M1.500 1.500h12v10h-12z" fill="#4c7cb0" stroke="#2a5688"/></svg></button>
        <button type="button" class="tool" aria-label="置于对象之下"><svg class="icon" viewBox="0 0 16 16"><path d="M1.500 1.500h12v9h-12z" fill="#4c7cb0" stroke="#2a5688"/><path d="M4.500 5.500h11v9h-11z" fill="#c4daed" fill-opacity=".85" stroke="#6c9cc4"/></svg></button>
      </div>
    </div>
  </main>

  <div class="splitter"></div>
  <section class="command">
    <div class="history"><output><span class="zh">命令</span>: '_about</output></div>
    <div class="prompt"><label for="cmd"><span class="zh">命令</span>:</label><input id="cmd" type="text"><span class="thumb"></span></div>
    <div class="watermark">
      <svg class="mark" viewBox="0 0 45 45"><path d="M0 0h45v45H0z" fill="url(#violet)"/><path d="M1 0h7l10 11 6-4-1 15 21 23h-7L27 33l-6 5 1-15z" fill="#fff"/></svg>
      <span class="name">方舟下载</span>
      <svg class="spark" viewBox="0 0 152 48"><path d="M57 15 48 27h6l-2 10 10-13h-6z" fill="#ff8c1a"/><path d="M123 27h7v2h-7zM123 30h7v2h-7zM123 33h7v5h4l-7 8-8-8h4z" fill="#ff8c1a"/></svg>
    </div>
  </section>
  <footer class="status"><svg viewBox="0 0 10 10"><path d="M8 0h2v2H8zM4 4h2v2H4zM8 4h2v2H8zM0 8h2v2H0zM4 8h2v2H4zM8 8h2v2H8z" fill="#b8b8b8"/></svg></footer>
</div>
</body>
</html>
```
FILE: styles.css
```css
*, *::before, *::after { box-sizing: border-box; }

body {
  margin: 0;
  padding: 3px 4px 4px 3px;
  height: 100vh;
  overflow: hidden;
  background: #fff;
  color: #000;
  font: 12px/20px "Open Sans", "Noto Sans CJK SC", sans-serif;
}

button, input, select { margin: 0; padding: 0; border: 0; background: none; color: inherit; font: inherit; }
svg { display: block; flex: none; }
.defs { position: absolute; width: 0; height: 0; }
.icon { width: 16px; height: 16px; }
.line { fill: none; stroke: #111; }
.pt { fill: #1667b4; stroke: none; }

.window {
  height: 100%;
  display: flex;
  flex-direction: column;
  border: 1px solid #8299ad;
  border-radius: 8px;
  background: #f0f0f0;
  overflow: hidden;
}

/* Title bar */
.titlebar { flex: none; height: 30px; display: flex; align-items: center; gap: 6px; padding-left: 8px; background: #eef3fa; }
.titlebar h1 { margin: 0; flex: 1; font-size: 12px; font-weight: 400; }
.caption { display: flex; }
.caption button { width: 46px; height: 30px; display: grid; place-items: center; }
.caption svg { fill: none; stroke: #111; }

/* Menu bar */
.menubar { flex: none; height: 21px; display: flex; align-items: flex-start; padding-left: 7px; background: #fff; }
.menubar > .icon { margin-top: 2px; }
.menus { width: 600px; display: flex; justify-content: space-between; }
.menus > button, .menu-root > button { padding: 0 7px; height: 20px; white-space: nowrap; }
.menu-root { position: relative; }
.menu-root .open { background: #fafafa; }
.mdi { margin: 1px 1px 0 auto; display: flex; gap: 1px; }
.mdi button { width: 18px; height: 18px; display: grid; place-items: center; border: 1px solid #dedede; border-radius: 2px; }
.mdi svg { width: 10px; height: 10px; fill: none; stroke: #75818c; }

.dropdown {
  position: absolute;
  z-index: 10;
  top: 19px;
  left: 0;
  width: 236px;
  padding: 3px 2px 2px;
  border: 1px solid #a0a0a0;
  background: #f0f0f0;
  box-shadow: 2px 2px 2px rgba(0, 0, 0, .45);
}
.dropdown button { display: grid; grid-template-columns: 16px 1fr auto; column-gap: 6px; align-items: center; width: 100%; height: 20px; padding: 0 8px 0 3px; text-align: left; white-space: nowrap; }
.dropdown span { grid-column: 2; }
.dropdown kbd, .dropdown .sub { grid-column: 3; font: inherit; font-size: 13px; }
.dropdown .sub { width: 5px; height: 8px; }
.dropdown button:disabled { color: #a0a0a0; text-shadow: 1px 1px #fff; }
.dropdown hr { height: 1px; margin: 2px 1px 6px; border: 0; background: #a0a0a0; }
.dropdown u { text-underline-offset: 1px; }

/* Toolbars */
.bars { flex: none; display: flex; height: 28px; }
.bar { flex: none; display: flex; align-items: center; padding: 0 2px 0 12px; border-top: 1px solid #fff; border-left: 1px solid #fff; border-right: 1px solid #a0a0a0; border-bottom: 1px solid #a0a0a0; margin-right: 2px; }
.bar-standard { width: 653px; }
.bar-layers { width: 385px; padding-right: 4px; }
.bar-cut { flex: 1 0 0; min-width: 0; overflow: hidden; margin-right: 0; padding-left: 11px; border-right: 0; }
.first { margin-right: auto; }
.tool { flex: none; width: 23px; height: 22px; display: grid; place-items: center; }
.narrow { width: 13px; color: #163f7c; }
.muted { color: #b4b9be; }
.tri { width: 8px; height: 8px; }
.sep { flex: none; width: 6px; height: 18px; background: linear-gradient(#909090, #909090) center / 1px 100% no-repeat; }
.help span { width: 16px; height: 16px; background: #1c5a9c; color: #fff; font-size: 13px; font-weight: 700; line-height: 16px; text-align: center; }
.letter { font-size: 18px; line-height: 22px; display: flex; align-items: center; justify-content: center; }
.ibeam { width: 5px; height: 16px; }
.find { position: relative; }
.find span { position: absolute; left: 4px; top: 3px; font-size: 8px; line-height: 12px; font-weight: 600; }

.combo { position: relative; flex: none; height: 22px; }
.combo select { display: block; appearance: none; width: 100%; height: 100%; padding: 0 20px 0 4px; border: 1px solid #7a7a7a; background: #fff; font: 10px/20px "Liberation Mono", "Noto Sans CJK SC", monospace; border-radius: 0; }
.combo::after { content: ""; position: absolute; right: 6px; top: 7px; width: 6px; height: 6px; border: solid #666; border-width: 0 1px 1px 0; transform: rotate(45deg); pointer-events: none; }
.combo::before { position: absolute; pointer-events: none; }
.w100 { width: 100px; }
.w120 { width: 120px; }
.w126 { width: 126px; }
.w150 { width: 150px; }
.w160 { width: 160px; }
.fill { width: 300px; }
.swatch select { padding-left: 19px; }
.swatch::before { content: ""; left: 6px; top: 6px; width: 10px; height: 10px; border: 1px solid #000; }
.linetype select { padding-left: 69px; }
.linetype::before { content: ""; left: 5px; top: 11px; width: 60px; height: 1px; background: #000; }
.weight select { padding-left: 44px; }
.weight::before { content: ""; left: 5px; top: 11px; width: 35px; height: 1px; background: #000; }
.off select { padding-left: 8px; border-color: #c8c8c8; background: #f0f0f0; color: #6d6d6d; font-size: 12px; opacity: 1; }
.off::after { border-color: #b0b0b0; }

/* Work area */
.work { flex: 1; min-height: 0; display: flex; }
.side { flex: none; border-top: 1px solid #fff; }
.side-left { width: 27px; }
.side-right { width: 27px; padding-left: 2px; }
.palette { display: flex; flex-direction: column; align-items: center; width: 24px; padding: 9px 0 4px; border-bottom: 1px solid #909090; }
.side-right .palette { border-left: 1px solid #fff; padding-bottom: 5px; padding-right: 1px; }
.side-right .second { border-top: 1px solid #fff; padding-top: 11px; }
.side-right .tool { width: 22px; }
.view { flex: 1; min-width: 0; display: flex; flex-direction: column; border: 1px solid #fff; border-left-color: #808080; border-top-color: #808080; }
.canvas { flex: 1; position: relative; background: #000; border-top: 1px solid #404040; }
.crosshair { position: absolute; left: 47px; top: 0; bottom: 0; width: 1px; background: #fff; }
.ucs { position: absolute; left: 14px; bottom: 0; width: 130px; height: 143px; }
.ucs text { fill: #fff; font: 300 26px Lato, sans-serif; }
.tabs { flex: none; height: 15px; display: flex; line-height: 14px; }
.step { width: 18px; height: 15px; display: grid; place-items: center; border-right: 1px solid #a0a0a0; background: #fafafa; }
.step svg { width: 10px; height: 10px; }
.sheets { display: flex; margin-left: 3px; }
.sheet { position: relative; width: 42px; height: 15px; text-align: center; }
.sheet svg { position: absolute; inset: 0; width: 100%; height: 100%; fill: #f0f0f0; stroke: #000; }
.sheet span { position: relative; }
.sheet.current { width: 39px; color: #fff; }
.current svg { fill: #000; }

/* Command line */
.splitter { flex: none; height: 16px; padding-top: 2px; }
.splitter::before { content: ""; display: block; height: 5px; border-top: 1px solid #fff; border-bottom: 2px solid #7a7a7a; }
.command { flex: none; position: relative; margin: 0 8px 0 17px; border-top: 2px solid #696969; border-left: 1px solid #696969; font: 13px/16px "Liberation Mono", "Noto Sans CJK SC", monospace; }
.zh { font-size: 16px; }
.history { height: 23px; padding-left: 1px; margin-right: 16px; background: #fff; }
.history output { display: block; height: 16px; }
.history::after { content: ""; position: absolute; left: 0; right: 0; top: 22px; height: 1px; background: #a0a0a0; }
.prompt { height: 20px; padding: 0 17px 0 0; display: flex; align-items: center; background: #fff; background-clip: content-box; }
.prompt label { padding-left: 1px; }
.prompt input { flex: 1; min-width: 0; height: 18px; outline: 0; }
.thumb { width: 69px; height: 20px; background: linear-gradient(#8c8c8c, #8c8c8c) 19px 9px / 17px 3px no-repeat #f0f0f0; }
.status { flex: none; height: 24px; display: flex; justify-content: flex-end; align-items: flex-end; padding: 0 2px 2px 0; border-top: 1px solid #a0a0a0; box-shadow: inset 0 1px #fff; }
.status svg { width: 10px; height: 10px; }

.watermark { position: absolute; right: 30px; top: -18px; display: flex; align-items: center; gap: 11px; filter: drop-shadow(1px 2px 1px rgba(0, 0, 0, .5)); }
.mark { width: 45px; height: 45px; }
.name { font: 500 38px/48px "Noto Sans CJK SC", sans-serif; }
.spark { position: absolute; right: 0; top: 0; width: 152px; height: 48px; }
```
